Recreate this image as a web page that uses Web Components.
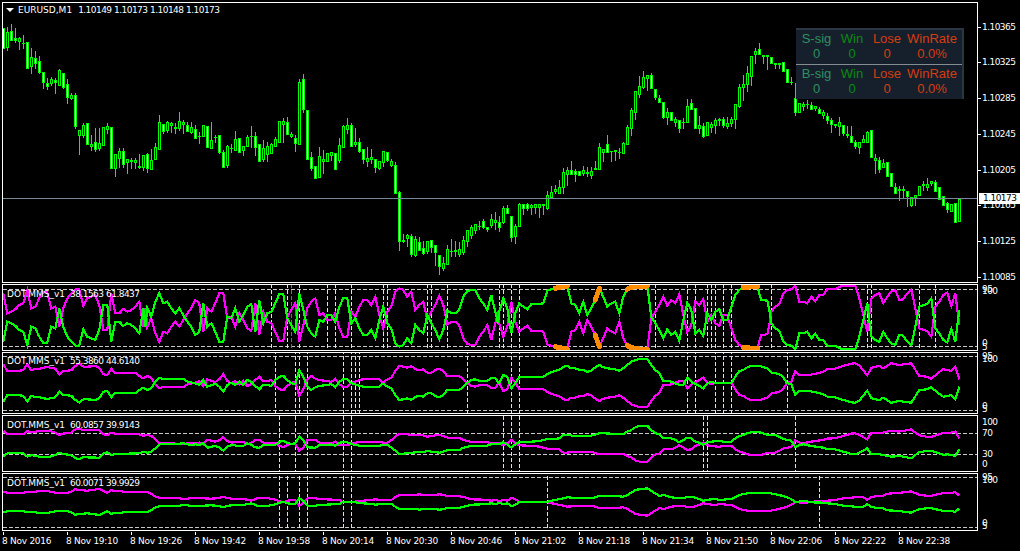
<!DOCTYPE html>
<html>
<head>
<meta charset="utf-8">
<title>EURUSD,M1</title>
<style>
  html, body { margin: 0; background: #000; overflow: hidden; }
  body { font-family: "DejaVu Sans", sans-serif; }
</style>
</head>
<body>
<mt-terminal>
  <candle-pane top="2" rows="281" style="--legend-left:3px"
    ticks="1.10365@27 1.10325@62 1.10285@98 1.10245@134 1.10205@170 1.10165@205 1.10125@241 1.10085@277">
    <chart-legend arrow name="EURUSD,M1">1.10149 1.10173 1.10148 1.10173</chart-legend>
    <stats-panel slot="over">
      <stats-row sig="S-sig"></stats-row>
      <stats-row sig="B-sig" divided></stats-row>
    </stats-panel>
  </candle-pane>
  <osc-pane name="a" top="284" rows="67" style="--legend-top:3px" ticks="95@289 100@291 0@343 5@347">
    <chart-legend name="DOT.MMS_v1">38.1563 61.8437</chart-legend>
  </osc-pane>
  <osc-pane name="b" top="352" rows="62" style="--legend-top:2px" ticks="95@356 100@359 0@406 5@409">
    <chart-legend name="DOT.MMS_v1">55.3860 44.6140</chart-legend>
  </osc-pane>
  <osc-pane name="c" top="415" rows="57" style="--legend-top:3px" ticks="100@422 70@433 30@454 0@464">
    <chart-legend name="DOT.MMS_v1">60.0857 39.9143</chart-legend>
  </osc-pane>
  <osc-pane name="d" top="473" rows="58" style="--legend-top:3px" ticks="95@477 100@480 0@523 5@526">
    <chart-legend name="DOT.MMS_v1">60.0071 39.9929</chart-legend>
  </osc-pane>
  <time-axis></time-axis>
</mt-terminal>

<script>
// bars: body top, body bottom, high, low, filled. bar i sits at x = 3 + 4i
const BARS = [
[28,48,28,48,1],[32,47,27,50,0],[31,40,24,40,1],[38,40,28,42,1],[38,41,37,49,0],[43,43,35,48,0],[42,68,42,68,1],[57,66,48,73,0],
[58,63,51,68,1],[61,72,56,73,1],[72,82,72,88,1],[83,86,78,89,1],[79,83,77,85,0],[80,82,78,93,1],[70,85,69,85,0],[73,87,73,88,1],
[84,97,79,103,1],[95,98,93,99,0],[95,126,93,128,1],[130,135,130,154,0],[125,135,123,137,0],[123,144,123,144,1],[144,146,135,150,0],[142,149,128,151,1],
[143,148,128,150,0],[127,145,127,145,0],[126,129,123,133,0],[127,168,127,168,1],[154,168,154,176,0],[151,158,148,167,0],[151,164,148,167,1],[159,162,159,173,0],
[160,161,158,168,0],[160,162,158,168,0],[166,167,154,168,0],[155,167,155,170,0],[154,168,153,172,1],[160,169,149,169,0],[147,159,143,159,0],[122,149,115,149,0],
[124,131,124,133,1],[122,130,121,132,0],[123,125,122,132,0],[127,128,123,133,0],[121,128,112,130,0],[122,124,120,133,0],[125,131,122,131,1],[127,132,122,133,0],
[129,138,125,138,1],[136,136,132,143,0],[125,136,125,136,0],[126,147,126,147,1],[140,148,122,148,0],[137,137,135,142,0],[135,152,135,153,1],[152,167,150,167,1],
[146,165,145,167,0],[148,148,144,152,0],[139,150,131,150,0],[138,152,138,152,1],[146,150,146,155,0],[137,146,135,146,0],[136,136,126,147,0],[136,147,132,155,1],
[144,161,144,161,1],[148,159,140,161,0],[146,154,142,161,0],[144,153,143,153,0],[139,146,137,146,0],[121,142,121,142,0],[121,124,118,142,0],[122,134,117,134,1],
[134,136,132,137,0],[138,143,135,151,1],[82,144,79,144,0],[79,109,74,112,1],[110,159,110,159,1],[157,168,152,170,1],[166,178,166,178,1],[156,177,147,177,0],
[159,161,150,173,0],[153,161,153,161,0],[152,155,152,160,0],[153,169,153,169,1],[145,160,138,162,0],[126,147,125,147,0],[125,129,118,133,0],[125,146,123,146,1],
[142,144,128,146,0],[142,151,138,152,1],[149,159,149,163,1],[158,161,147,166,0],[157,159,149,163,0],[159,167,159,172,1],[161,168,161,169,0],[151,162,151,166,0],
[152,160,152,161,1],[161,165,159,166,0],[165,193,162,193,1],[192,241,191,250,1],[240,241,234,242,0],[235,238,234,246,0],[236,254,234,256,1],[239,255,236,256,0],
[242,250,237,250,1],[248,253,241,254,1],[241,251,241,253,0],[240,247,240,252,1],[245,252,245,265,1],[255,266,255,274,1],[263,268,257,270,0],[249,264,245,264,0],
[251,251,239,256,0],[250,251,241,256,0],[249,254,242,256,0],[240,252,236,254,0],[230,241,230,246,0],[227,235,225,238,0],[224,230,224,233,0],[226,226,221,229,0],
[221,227,219,228,1],[227,229,227,231,1],[219,225,214,227,0],[220,222,212,229,0],[222,227,216,231,1],[208,222,206,223,0],[208,213,205,213,1],[216,237,216,241,1],
[226,236,224,243,0],[204,226,203,226,0],[204,208,204,214,1],[204,208,203,210,1],[205,207,204,214,0],[204,207,204,213,0],[204,207,204,217,0],[204,205,204,214,0],
[195,208,191,209,0],[192,197,186,197,0],[189,191,185,193,0],[187,193,180,193,0],[172,187,168,193,0],[170,174,167,185,0],[170,174,161,174,1],[171,174,169,181,1],
[171,175,171,175,1],[170,173,166,175,0],[172,173,167,176,0],[171,175,167,178,0],[168,169,161,169,0],[147,169,143,169,0],[149,152,149,161,0],[144,152,135,152,1],
[151,151,151,161,0],[150,151,150,160,0],[152,152,148,158,0],[143,153,142,153,0],[127,144,125,144,0],[110,128,108,135,0],[91,112,91,119,0],[86,94,76,97,0],
[77,87,71,88,0],[75,78,75,90,0],[75,88,73,88,1],[89,97,89,99,1],[98,102,95,102,1],[102,117,102,118,1],[112,117,108,124,0],[112,120,112,120,1],
[119,122,117,126,0],[120,128,120,132,1],[122,122,118,128,0],[106,122,99,122,0],[103,109,99,109,1],[108,128,108,128,1],[125,128,116,133,0],[126,136,123,137,1],
[122,135,122,135,0],[124,127,122,132,0],[120,125,118,133,0],[119,120,118,125,0],[119,125,117,127,1],[123,126,117,128,0],[119,123,117,126,0],[104,119,104,128,0],
[87,106,84,107,0],[84,87,75,100,0],[73,84,66,91,0],[56,76,56,85,0],[51,54,48,63,0],[49,54,43,54,1],[55,56,55,63,0],[55,56,55,69,0],
[57,63,57,63,1],[63,64,63,68,0],[63,64,63,68,0],[62,71,62,71,1],[69,82,69,82,1],[82,82,77,84,0],[98,112,83,115,1],[103,112,103,112,0],
[104,106,102,110,0],[104,104,100,108,0],[105,109,102,109,1],[106,108,106,110,0],[109,113,107,113,1],[112,115,110,118,0],[116,120,113,123,1],[120,124,118,132,1],
[124,125,124,127,0],[122,126,117,135,0],[125,133,125,135,1],[134,135,126,137,0],[136,142,126,142,1],[142,146,140,148,1],[142,147,142,153,0],[139,142,135,142,0],
[132,142,131,142,0],[130,157,130,157,1],[158,160,154,173,0],[160,169,157,172,1],[163,167,159,167,0],[162,176,162,176,1],[173,186,173,186,1],[187,193,183,193,1],
[189,190,186,200,0],[189,190,186,198,0],[191,196,191,206,1],[197,205,197,206,0],[195,197,195,205,0],[186,195,186,195,0],[184,185,181,190,0],[184,187,178,190,0],
[181,183,181,185,0],[182,191,180,191,1],[187,199,187,199,1],[196,205,196,205,1],[203,209,202,212,1],[204,211,204,211,0],[203,222,203,222,1],[199,221,199,221,0]
];

// green line of each oscillator, the magenta one mirrors it about the centre.
// chunks are [x origin, y origin, "x:y ..."] with x and y at 3x scale
const OSC = {
  a: { centre: 317.5, levels: [289, 346], cyan: [291],
    marks: [271,287,299,327,335,351,383,387,427,431,447,499,503,511,519,655,687,695,707,711,715,723,731,771,867,871,919,935],
    orange: [[555,568],[595,600],[627,648],[743,758]],
    green: [
      [0,280,"10:185 22:125 34:130 46:137 58:150 70:155 82:195 94:140 106:145 118:170 130:188 142:188 154:140 166:145 178:85 190:140 202:170 214:185 226:197 238:197 250:147 262:170 274:175 286:180 298:150 310:75 322:75 334:185 346:125 358:125 370:138 382:130 394:135 406:145 418:160 430:85 436:140 442:85 454:110 466:65 478:40 490:70 502:65 514:85 526:100 538:85 550:105 562:125 574:140 586:165 598:155 610:70 622:140 634:130 646:155 658:185 670:185 682:110 694:115 706:85 718:125 730:105 742:80 754:72 766:155 778:60 790:130 802:100 814:95 826:70 838:42 850:42 862:115 874:135 886:155 898:40 910:90 922:140 934:160 946:170 958:120 970:125 982:105 994:105 1006:125 1018:80"],
      [340,280,"10:55 22:55 34:130 46:115 58:145 70:165 82:165 94:150 106:175 118:120 130:80 142:130 154:145 166:190 178:200 190:195 202:175 214:190 226:135 238:150 250:160 262:105 274:130 286:150 298:178 310:150 322:92 334:100 346:100 358:88 370:50 382:33 394:30 406:30 418:55 430:70 442:90 454:45 466:95 474:130 478:95 490:55 502:85 514:160 526:100 538:70 550:80 562:88 574:72 586:72 598:72 610:70 622:32 634:28 646:25 658:22 670:20 682:18 694:70 706:75 718:100 730:65 742:105 754:85 766:60 778:25 790:50 802:80 814:70 826:65 838:100 850:50 862:28 874:22 886:20 898:18 910:18 922:18 934:110 946:130 958:150 970:175 982:148 994:165 1006:155 1018:182"],
      [680,170,"10:450 22:398 34:420 46:490 58:480 70:498 82:430 94:450 106:425 118:418 130:450 142:450 154:410 166:375 178:360 190:352 202:352 214:350 232:350 244:390 262:392 270:430 274:460 286:475 298:482 310:515 322:525 334:527 346:538 358:490 370:490 382:485 394:505 406:492 418:510 430:510 442:527 466:527 478:535 490:537 526:537 538:500 550:450 562:400 574:500 586:510 598:515 610:485 622:505 634:520 646:525 658:495 670:497 682:515 694:527 706:470 718:410 730:405 742:402 754:385 766:475 778:490 790:510 802:517 814:477 826:515 838:420"]
    ] },
  b: { centre: 383, levels: [356, 410],
    marks: [275,295,299,307,343,351,355,359,467,511,519,687,695,715,723,731,787],
    green: [
      [0,280,"10:365 22:345 46:345 70:347 82:365 94:347 106:352 118:352 142:357 166:352 178:335 190:345 214:347 226:360 238:367 250:358 262:358 286:360 298:355 310:335 322:332 334:352 346:338 358:340 382:340 406:340 418:330 430:323 442:330 454:325 466:305 478:293 490:298 514:298 538:296 550:296 562:305 586:310 598:315 610:300 622:320 646:312 658:320 670:335 682:315 694:308 706:315 718:305 730:315 742:300 754:305 766:318 778:328 790:315 802:315 814:318 826:300 838:290 850:287 862:300 874:310 886:312 898:270 910:290 922:320 934:330 946:322 958:318 982:315 994:312 1006:322 1018:305"],
      [340,280,"10:297 22:297 34:310 46:313 58:318 70:320 94:322 106:322 118:320 130:310 142:320 154:325 166:345 178:360 190:358 202:355 214:360 226:350 238:347 250:350 262:340 274:340 286:348 298:352 310:345 322:330 346:330 358:330 370:320 382:308 394:300 406:298 418:302 442:302 454:295 466:295 478:310 490:285 502:290 514:325 526:310 538:292 574:292 598:290 610:290 622:282 646:272 658:270 670:260 682:258 694:265 706:265 718:270 730:270 742:275 754:272 766:262 778:255 790:262 802:265 826:268 838:272 850:265 862:255 874:245 886:240 898:237 922:237 934:255 946:270 958:280 970:303 982:302 994:305 1006:310 1018:315"],
      [680,360,"10:75 22:53 34:65 46:72 58:78 70:85 82:70 94:65 106:70 154:70 166:50 178:33 190:30 202:22 214:17 238:17 262:25 274:38 298:42 310:52 322:70 334:72 346:105 358:92 382:92 406:97 430:103 442:110 466:112 490:120 514:127 526:128 538:122 562:92 574:115 586:118 598:120 610:113 634:128 658:122 670:125 694:128 718:90 742:88 754:82 778:102 790:110 802:108 814:105 826:118 838:80"]
    ] },
  c: { centre: 443.8, levels: [433, 454],
    marks: [279,295,307,343,351,503,511,519,703,707,795],
    green: [
      [0,410,"10:140 22:130 70:130 82:140 94:135 118:140 150:140 166:135 178:128 190:132 214:135 226:145 238:148 250:142 298:143 310:130 322:127 334:135 346:132 418:130 430:125 442:128 454:125 466:115 478:103 514:103 550:100 574:105 586:103 598:105 610:100 622:113 646:108 658:112 670:122 682:110 694:105 718:108 730:108 742:100 754:105 766:112 778:113 790:105 826:105 838:95 850:92 862:98 874:102 886:100 898:80 910:90 922:112 946:113 958:105 982:105 994:103 1006:108 1018:98"],
      [340,410,"10:97 22:97 34:102 58:107 118:107 130:105 142:105 154:112 166:122 178:132 202:130 226:127 250:127 262:122 274:125 298:128 310:125 322:120 358:120 370:113 382:110 394:107 442:107 454:102 478:103 490:97 502:103 514:113 526:103 538:97 574:95 598:93 622:87 646:87 658:85 670:75 682:75 706:78 742:78 754:77 778:70 790:70 838:72 850:72 862:65 874:60 886:52 898:48 922:47 934:60 946:70 958:72 970:85 994:85 1006:90 1018:97"],
      [680,360,"10:240 22:233 34:235 46:245 58:248 70:255 82:247 94:245 118:242 130:245 154:245 166:235 178:228 190:225 202:220 214:217 238:217 250:220 262:225 286:225 298:230 310:237 334:242 346:262 358:255 370:253 394:258 430:263 442:267 466:268 490:275 514:282 526:283 538:278 562:265 574:283 598:283 610:285 622:288 634:290 658:288 670:290 694:295 706:285 718:277 742:272 754:272 778:280 790:285 802:283 814:285 826:288 838:268"]
    ] },
  d: { centre: 502, levels: [477, 527],
    marks: [279,287,299,307,343,351,547,819],
    green: [
      [0,410,"10:308 22:304 70:304 82:307 106:307 118:309 142:309 154:306 178:302 202:304 214:307 226:314 238:312 262:310 298:315 310:310 322:303 334:312 346:308 358:310 370:307 442:306 454:300 466:293 478:288 490:288 526:287 538:287 550:284 562:286 574:288 610:287 634:286 658:288 670:292 682:288 694:286 718:286 742:283 754:280 766:285 778:289 802:288 826:283 838:278 850:275 862:280 886:283 898:265 910:272 922:287 946:287 958:285 1018:282"],
      [340,410,"10:275 34:275 58:279 94:282 106:284 130:281 154:282 166:290 178:298 202:298 226:297 238:299 250:297 274:296 298:299 310:298 322:294 358:293 370:291 394:284 430:283 454:280 466:283 478:278 490:283 502:280 514:288 526:285 538:275 622:275 646:270 670:265 682:262 718:265 750:265 766:262 778:258 826:258 850:260 862:255 874:248 886:240 898:238 922:235 934:243 946:250 958:258 970:255 982:258 994:262 1018:265"],
      [680,360,"10:415 22:410 34:410 58:417 70:422 94:418 106:417 118:420 142:418 154:417 166:412 178:405 202:400 226:398 262:398 286:403 310:408 334:417 346:427 370:422 394:427 430:428 442:430 466:432 490:437 526:440 550:440 562:433 574:441 598:445 610:445 622:451 658:453 670:455 694:458 718:447 742:445 754:445 778:450 790:453 814:453 826:456 838:445"]
    ] }
};

function readTrace(chunks) {
  const pts = [];
  for (const [bx, by, list] of chunks) {
    for (const p of list.split(' ')) {
      const [x, y] = p.split(':').map(Number);
      pts.push([bx + x / 3, by + y / 3]);
    }
  }
  return pts;
}
const ptsAttr = (pts) => pts.map(p => p[0].toFixed(1) + ',' + p[1].toFixed(1)).join(' ');

const templateTerminal = document.createElement('template');
templateTerminal.innerHTML = `
  <style>
    :host {
      display: flex;
      flex-direction: column;
      gap: 1px;
      width: 1020px;
      height: 551px;
      padding: 2px 0 0 2px;
      box-sizing: border-box;
      background: #000;
      color: #fff;
      font: 9px "DejaVu Sans", sans-serif;
    }
  </style>
  <slot></slot>`;

class MtTerminal extends HTMLElement {
  constructor() {
    super();
    this.attachShadow({ mode: 'open' }).appendChild(templateTerminal.content.cloneNode(true));
  }
}

const templatePane = document.createElement('template');
templatePane.innerHTML = `
  <style>
    :host { display: flex; flex: none; }
    .plot {
      position: relative;
      width: 976px;
      box-sizing: border-box;
      border: 1px solid #fff;
      overflow: hidden;
    }
    svg { display: block; width: 974px; height: 100%; }
    .scale { position: relative; flex: 1; }
    .scale span {
      position: absolute;
      line-height: 12px;
      white-space: nowrap;
      letter-spacing: -.55px;
    }
    .scale i { position: absolute; left: 0; width: 3px; height: 1px; background: #fff; }
    .scale b {
      position: absolute;
      left: 1px; right: 0;
      height: 11px;
      padding-left: 4px;
      background: #fff;
      color: #000;
      font-weight: normal;
      line-height: 11px;
      letter-spacing: -.55px;
    }
    ::slotted(chart-legend) { position: absolute; left: var(--legend-left, 4px); top: var(--legend-top, 1px); }
  </style>
  <div class="plot"><svg shape-rendering="crispEdges"></svg><slot></slot><slot name="over"></slot></div>
  <div class="scale"></div>`;

class ChartPane extends HTMLElement {
  constructor() {
    super();
    this.attachShadow({ mode: 'open' }).appendChild(templatePane.content.cloneNode(true));
  }

  connectedCallback() {
    const top = +this.getAttribute('top');
    const rows = +this.getAttribute('rows');
    this.style.height = rows + 'px';
    const svg = this.shadowRoot.querySelector('svg');
    // the drawing uses window pixels, so reading positions off the chart stays simple
    svg.setAttribute('viewBox', `3 ${top + 1} 974 ${rows - 2}`);
    svg.innerHTML = this.draw();
    const scale = this.shadowRoot.querySelector('.scale');
    let html = '';
    for (const t of this.getAttribute('ticks').split(' ')) {
      const [txt, y] = t.split('@');
      html += this.tick(txt, +y, top);
    }
    scale.innerHTML = html + this.extraScale(top);
  }

  tick(txt, y, top) { return `<span style="left:4px;top:${y - top - 6}px">${txt}</span>`; }
  extraScale() { return ''; }
  draw() { return ''; }
}

class CandlePane extends ChartPane {
  draw() {
    let wick = '', white = '', black = '';
    BARS.forEach((b, i) => {
      const x = 3 + 4 * i;
      const rect = (rx, ry, w, h) => `M${rx} ${ry}h${w}v${h}h${-w}z`;
      wick += rect(x, b[2], 1, b[3] - b[2] + 1);
      wick += rect(x - 1, b[0], 3, b[1] - b[0] + 1);
      if (b[1] - b[0] >= 2) {
        const c = rect(x, b[0] + 1, 1, b[1] - b[0] - 1);
        if (b[4]) white += c; else black += c;
      }
    });
    return `<path fill="#00ff00" d="${wick}"/><path fill="#000" d="${black}"/><path fill="#fff" d="${white}"/>
      <rect x="3" y="198" width="974" height="1" fill="#778899"/>`;
  }

  tick(txt, y, top) {
    return `<i style="top:${y - top}px"></i><span style="left:4px;top:${y - top - 6}px">${txt}</span>`;
  }

  extraScale(top) {
    return `<b style="top:${193 - top}px">1.10173</b>`;
  }
}

class OscPane extends ChartPane {
  draw() {
    const d = OSC[this.getAttribute('name')];
    const green = readTrace(d.green);
    const pink = green.map(p => [p[0], 2 * d.centre - p[1]]);
    let s = '';
    for (const y of d.levels) s += `<line x1="3" x2="977" y1="${y + .5}" y2="${y + .5}" stroke="#c8c8c8" stroke-dasharray="4 2"/>`;
    const vert = (x, c) => `<line x1="${x + .5}" x2="${x + .5}" y1="200" y2="540" stroke="${c}" stroke-dasharray="4 2"/>`;
    for (const x of d.marks) s += vert(x, '#ffff00');
    for (const x of d.cyan || []) s += vert(x, '#1f8f8f');
    s += `<polyline fill="none" stroke="#ff00ff" stroke-width="2.2" points="${ptsAttr(pink)}"/>`;
    s += `<polyline fill="none" stroke="#00ff00" stroke-width="2.2" points="${ptsAttr(green)}"/>`;
    for (const [a, b] of d.orange || []) {
      const inside = (p) => p[0] >= a && p[0] <= b;
      s += `<polyline fill="none" stroke="#ff8c00" stroke-width="5" stroke-linecap="round" points="${ptsAttr(green.filter(inside))}"/>`;
      s += `<polyline fill="none" stroke="#ff8c00" stroke-width="5" stroke-linecap="round" points="${ptsAttr(pink.filter(inside))}"/>`;
    }
    return s;
  }
}

const templateLegend = document.createElement('template');
templateLegend.innerHTML = `
  <style>
    :host { display: flex; align-items: center; gap: 5px; white-space: nowrap; line-height: 12px; color: #fff; }
    .arrow { width: 0; height: 0; margin-right: -1px; border: 4px solid transparent; border-top: 4px solid #fff; border-bottom: 0; }
    .arrow[hidden] { display: none; }
    .values { letter-spacing: -.55px; word-spacing: .3px; }
    :host([arrow]) .values { margin-left: 1px; }
  </style>
  <span class="arrow" hidden></span><span class="name"></span><span class="values"><slot></slot></span>`;

class ChartLegend extends HTMLElement {
  constructor() {
    super();
    this.attachShadow({ mode: 'open' }).appendChild(templateLegend.content.cloneNode(true));
    if (this.hasAttribute('arrow')) this.shadowRoot.querySelector('.arrow').hidden = false;
    this.shadowRoot.querySelector('.name').textContent = this.getAttribute('name');
  }
}

const templatePanel = document.createElement('template');
templatePanel.innerHTML = `
  <style>
    :host {
      position: absolute;
      left: 793px;
      top: 25px;
      width: 168px;
      height: 71px;
      box-sizing: border-box;
      background: #16202c;
      border-top: 2px solid #2a3641;
      border-right: 2px solid #2a3641;
      font: 13px "Liberation Sans", Arial, sans-serif;
    }
  </style>
  <slot></slot>`;

class StatsPanel extends HTMLElement {
  constructor() {
    super();
    this.attachShadow({ mode: 'open' }).appendChild(templatePanel.content.cloneNode(true));
  }
}

const templateRow = document.createElement('template');
templateRow.innerHTML = `
  <style>
    :host {
      display: grid;
      grid-template-columns: 41px 30px 40px 50px;
      grid-auto-rows: 15px;
      height: 33px;
      padding-top: 1px;
      text-align: center;
      line-height: 15px;
    }
    :host([divided]) { border-top: 1px solid #858d93; }
    .sig { color: #2e8f63; }
    .win { color: #0b8a12; }
    .lose { color: #d63c12; }
  </style>
  <span class="sig"></span><span class="win">Win</span><span class="lose">Lose</span><span class="lose">WinRate</span>
  <span class="sig">0</span><span class="win">0</span><span class="lose">0</span><span class="lose">0.0%</span>`;

class StatsRow extends HTMLElement {
  constructor() {
    super();
    this.attachShadow({ mode: 'open' }).appendChild(templateRow.content.cloneNode(true));
    this.shadowRoot.querySelector('.sig').textContent = this.getAttribute('sig');
  }
}

const templateAxis = document.createElement('template');
templateAxis.innerHTML = `
  <style>
    :host { display: flex; flex: 1; letter-spacing: -.27px; }
    span {
      flex: none;
      position: relative;
      box-sizing: border-box;
      width: 64px;
      padding-top: 3px;
      line-height: 12px;
      white-space: nowrap;
    }
    span::before { content: ""; position: absolute; left: 1px; top: 0; width: 1px; height: 3px; background: #fff; }
  </style>`;

class TimeAxis extends HTMLElement {
  constructor() {
    super();
    this.attachShadow({ mode: 'open' }).appendChild(templateAxis.content.cloneNode(true));
    const labels = ['8 Nov 2016','8 Nov 19:10','8 Nov 19:26','8 Nov 19:42','8 Nov 19:58','8 Nov 20:14','8 Nov 20:30','8 Nov 20:46',
      '8 Nov 21:02','8 Nov 21:18','8 Nov 21:34','8 Nov 21:50','8 Nov 22:06','8 Nov 22:22','8 Nov 22:38'];
    for (const txt of labels) {
      const s = document.createElement('span');
      s.textContent = txt;
      this.shadowRoot.appendChild(s);
    }
  }
}

customElements.define('chart-legend', ChartLegend);
customElements.define('stats-row', StatsRow);
customElements.define('stats-panel', StatsPanel);
customElements.define('candle-pane', CandlePane);
customElements.define('osc-pane', OscPane);
customElements.define('time-axis', TimeAxis);
customElements.define('mt-terminal', MtTerminal);
</script>
</body>
</html>
